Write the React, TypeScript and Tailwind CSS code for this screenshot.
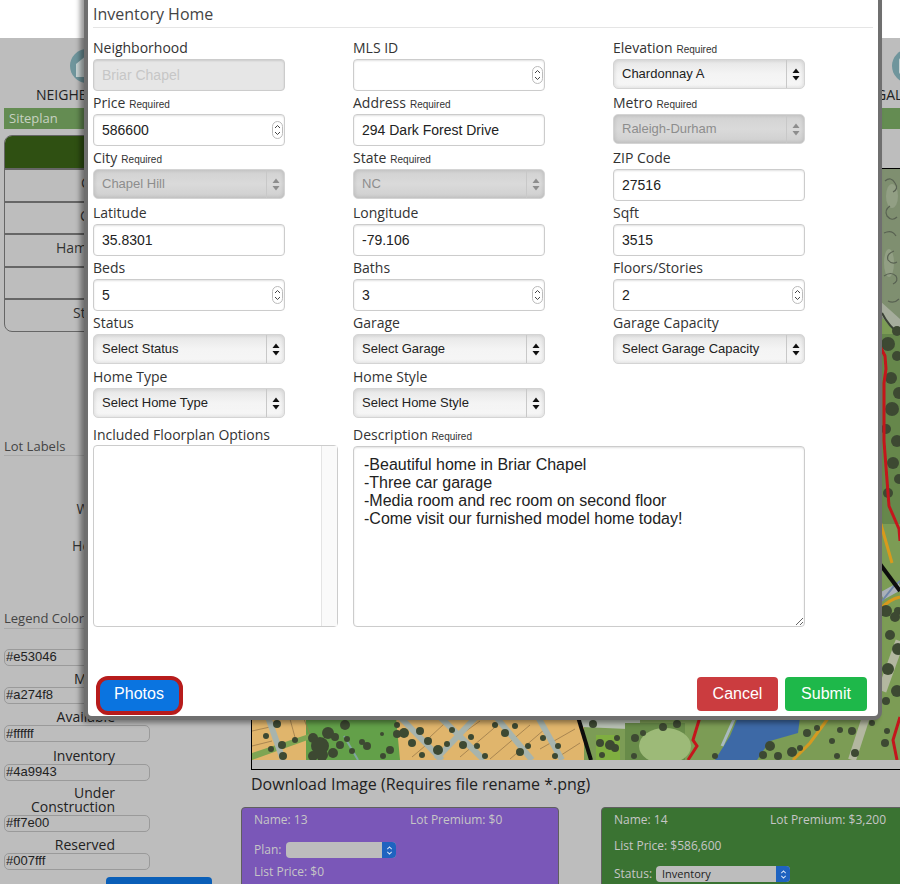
const sans = "font-['Liberation_Sans',Arial,sans-serif]";

// [x, y, r] of the tree blobs seen on the siteplan, in page coordinates
const trees = [
  [277,723,4],[266,735,3],[282,744,4],[271,748,3],[283,755,4],[295,739,3],[320,745,9],[313,737,5],[328,732,6],[322,754,6],
  [313,755,5],[335,736,4],[340,744,4],[345,724,5],[333,752,5],[352,750,3],[347,738,3],[367,745,4],[382,733,2],[362,741,3],
  [397,724,3],[397,733,4],[404,732,5],[390,749,4],[383,755,3],[412,742,4],[420,730,4],[428,740,4],[438,749,5],[422,754,3],
  [452,729,3],[463,744,4],[447,743,3],[477,745,3],[471,736,3],[485,755,3],[505,732,4],[515,725,3],[520,751,4],[528,745,3],
  [543,737,3],[558,745,3],[555,755,3],[495,724,3],[593,723,4],[600,742,4],[610,744,5],[615,747,4],[602,754,3],[617,737,3],
  [635,737,4],[643,732,3],[634,755,3],[663,726,4],[677,723,4],[715,755,3],[770,745,5],[763,754,4],[778,755,4],[792,751,5],
  [800,747,3],[807,732,4],[817,727,3],[832,740,3],[840,729,3],[852,730,4],[837,755,3],[855,752,4],[872,722,3],[887,730,3],
  [885,742,4],[888,343,7],[897,330,5],[891,377,6],[899,392,6],[892,408,7],[886,428,5],[897,440,6],[893,462,6],[899,478,5],
  [888,492,5],[897,355,5],[886,610,6],[895,616,5],[890,634,5],[898,648,6],[888,668,6],[897,690,6],[886,700,4],[898,610,4],
];

const lotLines = [
  "M252 730 L270 726","M252 745 L272 740","M290 718 L296 740","M304 718 L310 734","M452 740 L480 720","M460 756 L500 722",
  "M490 758 L530 724","M510 758 L545 728","M540 748 L575 728","M555 758 L580 742","M412 756 L425 745","M445 722 L430 736",
];

const squiggles = [
  "M885 180 q6 -5 10 2 q4 6 -2 9","M890 205 q-6 4 -3 10 q5 6 10 1","M884 232 q8 -4 12 3","M894 250 q-8 3 -6 9 q4 5 9 2",
  "M884 275 q7 -5 12 0 q3 5 -3 8","M888 300 q6 3 11 -2",
];

function SitePlan() {
  return (
    <svg viewBox="252 168 648 591" className="block h-[591px] w-[648px]">
      <defs>
        <filter id="soft">
          <feGaussianBlur stdDeviation="0.6" />
        </filter>
      </defs>
      <g filter="url(#soft)">
        <rect x="252" y="168" width="648" height="591" fill="#7b9c55" />
        {/* pale field on the right */}
        <rect x="880" y="168" width="20" height="150" fill="#7f8f70" />
        <ellipse cx="892" cy="195" rx="6" ry="12" fill="#929f84" />
        <ellipse cx="889" cy="262" rx="5" ry="14" fill="#929f84" />
        <path d="M880 312 Q888 326 900 332 L900 318 L880 300 Z" fill="#a6ad9c" />
        <path d="M882 312 Q889 326 900 333" fill="none" stroke="#3a4236" strokeWidth="2" />
        <rect x="880" y="333" width="20" height="190" fill="#66874b" />
        {squiggles.map((d) => (
          <path key={d} d={d} fill="none" stroke="#596252" strokeWidth="1.2" />
        ))}
        {/* lots */}
        <rect x="252" y="700" width="332" height="59" fill="#e0b56c" />
        <path d="M306 716 L396 716 L400 759 L306 759 Z" fill="#64a048" />
        <path d="M252 752 L312 732 L316 736 L252 759 Z" fill="#7ea552" />
        {lotLines.map((d) => (
          <path key={d} d={d} fill="none" stroke="#9b7a4a" strokeWidth="0.8" />
        ))}
        {/* roads */}
        <g fill="none" stroke="#a7b4ad" strokeWidth="6">
          <path d="M268 716 L283 759" />
          <path d="M400 716 L442 759" />
          <path d="M476 716 L436 758" />
          <path d="M440 716 L484 759" />
          <path d="M496 716 L532 759" />
          <path d="M538 716 L562 759" />
          <path d="M344 735 L358 759" strokeWidth="2" stroke="#7fa5a0" />
        </g>
        <path d="M576 716 L592 716 L640 716 L640 759 L628 759 L628 728 L582 726 Z" fill="#b8c0b4" />
        <rect x="596" y="734" width="24" height="25" fill="#7fae3f" />
        <rect x="625" y="722" width="60" height="37" fill="#688b49" />
        <ellipse cx="665" cy="745" rx="26" ry="18" fill="#9dba78" />
        <path d="M578 716 L591 759" fill="none" stroke="#0d0d0d" strokeWidth="4" />
        {/* lake */}
        <path d="M738 716 L800 716 L798 732 L770 740 L757 759 L715 759 L730 735 Z" fill="#3e69a6" />
        <path d="M735 716 L722 745" fill="none" stroke="#a9bac0" strokeWidth="3" />
        <path d="M866 716 L852 759" fill="none" stroke="#b3b7a0" strokeWidth="8" />
        <path d="M882 690 L900 640" fill="none" stroke="#b3b7a0" strokeWidth="9" />
        {/* paths at the right edge */}
        <path d="M882 595 L900 585" fill="none" stroke="#aab0b8" strokeWidth="8" />
        <path d="M882 600 L894 585 L900 580" fill="none" stroke="#6f86a8" strokeWidth="2" />
        <path d="M880 563 L900 590" fill="none" stroke="#0d0d0d" strokeWidth="4" />
        <path d="M880 520 L892 562" fill="none" stroke="#d89a1c" strokeWidth="3" />
        <path d="M880 608 Q890 598 900 596" fill="none" stroke="#d89a1c" strokeWidth="3" />
        <path d="M829 716 L810 742 L793 759" fill="none" stroke="#d49a22" strokeWidth="3" />
        {trees.map(([x, y, r]) => (
          <circle key={`${x}-${y}`} cx={x} cy={y} r={r} fill="#3d4a33" />
        ))}
        {/* red trail */}
        <g fill="none" stroke="#c4161c" strokeWidth="3">
          <path d="M880 345 L885 355 L886 368 L884 382 L884 440 L889 505 L899 528 L900 540" />
          <path d="M700 716 L693 739 L697 745 L688 759" />
          <path d="M900 716 L893 739 L897 759" />
        </g>
      </g>
    </svg>
  );
}

function Label({ text, required }: { text: string; required?: boolean }) {
  return (
    <label className="block h-[23px] text-sm leading-[23px] whitespace-nowrap text-[#333]">
      {text}
      {required && <span className={`${sans} ml-1 text-[10px]`}>Required</span>}
    </label>
  );
}

const inputClass = `${sans} h-[32px] w-full rounded-[4px] border border-[#ccc] px-2 text-sm shadow-[inset_0_1px_2px_rgba(0,0,0,0.12)] outline-none`;

function TextField({ value = "", disabled }: { value?: string; disabled?: boolean }) {
  return (
    <input
      readOnly
      value={value}
      className={`${inputClass} ${disabled ? "bg-[#e6e6e6] text-[#c6c6c6]" : "bg-white text-[#222]"}`}
    />
  );
}

function NumberField({ value = "" }: { value?: string }) {
  return (
    <div className="relative">
      <TextField value={value} />
      <div className="absolute top-[7px] right-[2px] flex h-[18px] w-[11px] items-center justify-center rounded-full border border-[#bbb] bg-white">
        <svg viewBox="0 0 9 14" className="h-[14px] w-[9px]" fill="none" stroke="#444" strokeWidth="1">
          <path d="M2 5 L4.5 2.5 L7 5" />
          <path d="M2 9 L4.5 11.5 L7 9" />
        </svg>
      </div>
    </div>
  );
}

function SelectField({ value, disabled }: { value: string; disabled?: boolean }) {
  return (
    <div
      className={`relative h-[30px] w-full rounded-[5px] border border-[#d4d4d4] shadow-[inset_0_0_4px_rgba(0,0,0,0.14)] bg-linear-to-b ${
        disabled ? "from-[#d2d2d2] via-[#dadada] to-[#cfcfcf]" : "from-[#e6e6e6] via-[#f4f4f4] to-[#f6f6f6]"
      }`}
    >
      <select
        disabled={disabled}
        value={value}
        onChange={() => {}}
        className={`${sans} h-[28px] w-full appearance-none bg-transparent pb-[3px] pl-2 text-[13px] outline-none ${
          disabled ? "text-[#8d8d8d] opacity-100" : "text-[#222]"
        }`}
      >
        <option>{value}</option>
      </select>
      <div className="pointer-events-none absolute top-0 right-0 flex h-full w-[18px] items-center justify-center border-l border-[#c8c8c8]">
        <svg viewBox="0 0 8 13" className="h-[13px] w-[8px]" fill={disabled ? "#8d8d8d" : "#111"}>
          <path d="M4 0.5 L7.5 5 L0.5 5 Z" />
          <path d="M4 12.5 L7.5 8 L0.5 8 Z" />
        </svg>
      </div>
    </div>
  );
}

type Field = {
  label: string;
  required?: boolean;
  kind: "text" | "number" | "select";
  value?: string;
  disabled?: boolean;
};

const fields: Field[] = [
  { label: "Neighborhood", kind: "text", value: "Briar Chapel", disabled: true },
  { label: "MLS ID", kind: "number" },
  { label: "Elevation", required: true, kind: "select", value: "Chardonnay A" },
  { label: "Price", required: true, kind: "number", value: "586600" },
  { label: "Address", required: true, kind: "text", value: "294 Dark Forest Drive" },
  { label: "Metro", required: true, kind: "select", value: "Raleigh-Durham", disabled: true },
  { label: "City", required: true, kind: "select", value: "Chapel Hill", disabled: true },
  { label: "State", required: true, kind: "select", value: "NC", disabled: true },
  { label: "ZIP Code", kind: "text", value: "27516" },
  { label: "Latitude", kind: "text", value: "35.8301" },
  { label: "Longitude", kind: "text", value: "-79.106" },
  { label: "Sqft", kind: "text", value: "3515" },
  { label: "Beds", kind: "number", value: "5" },
  { label: "Baths", kind: "number", value: "3" },
  { label: "Floors/Stories", kind: "number", value: "2" },
  { label: "Status", kind: "select", value: "Select Status" },
  { label: "Garage", kind: "select", value: "Select Garage" },
  { label: "Garage Capacity", kind: "select", value: "Select Garage Capacity" },
  { label: "Home Type", kind: "select", value: "Select Home Type" },
  { label: "Home Style", kind: "select", value: "Select Home Style" },
];

const description = `-Beautiful home in Briar Chapel
-Three car garage
-Media room and rec room on second floor
-Come visit our furnished model home today!`;

function InventoryModal() {
  return (
    <div className="absolute top-[-10px] left-[88px] h-[726px] w-[790px] rounded-[4px] bg-white px-[5px] shadow-[0_0_0_4px_#6f6f6f,-4px_3px_5px_4px_rgba(0,0,0,0.4)]">
      <h2 className="mt-0 h-[38px] border-b border-[#e5e5e5] pt-[12px] text-base leading-[24px] text-[#444]">
        Inventory Home
      </h2>
      <div className="grid grid-cols-[192px_192px_192px] grid-rows-[55px_55px_55px_55px_55px_54px_54px] gap-x-[68px] pt-[8px]">
        {fields.map((f) => (
          <div key={f.label}>
            <Label text={f.label} required={f.required} />
            {f.kind === "text" && <TextField value={f.value} disabled={f.disabled} />}
            {f.kind === "number" && <NumberField value={f.value} />}
            {f.kind === "select" && <SelectField value={f.value ?? ""} disabled={f.disabled} />}
          </div>
        ))}
      </div>
      <div className="flex gap-[15px]">
        <div className="w-[245px]">
          <div className="h-[26px] pt-1 text-sm leading-[23px] text-[#333]">Included Floorplan Options</div>
          <div className="flex h-[182px] rounded-[4px] border border-[#ccc] bg-white">
            <div className="flex-1" />
            <div className="w-[16px] border-l border-[#e4e4e4] bg-[#fafafa]" />
          </div>
        </div>
        <div className="w-[452px]">
          <div className="h-[27px] pt-1 text-sm leading-[23px] text-[#333]">
            Description <span className={`${sans} text-[10px]`}>Required</span>
          </div>
          <textarea
            readOnly
            value={description}
            className={`${sans} block h-[181px] w-full rounded-[4px] border border-[#ccc] bg-white px-[10px] pt-[9px] pb-2 text-base leading-[18px] text-[#222] shadow-[inset_0_1px_2px_rgba(0,0,0,0.12)] outline-none`}
          />
        </div>
      </div>
      <div className={`${sans} mt-[50px] flex items-start justify-between pr-[6px] pl-[3px] text-base text-white`}>
        <button className="-mt-[1px] h-[39px] w-[87px] rounded-[12px] border-4 border-[#b71c1c] bg-[#0a74e0] pr-[1px] pb-[3px]">
          Photos
        </button>
        <div className="flex gap-[7px]">
          <button className="h-[34px] w-[81px] rounded-[4px] bg-[#cb3c3f]">Cancel</button>
          <button className="h-[34px] w-[82px] rounded-[4px] bg-[#1eb84a]">Submit</button>
        </div>
      </div>
    </div>
  );
}

const legend = [
  { label: ["Sold"], value: "#e53046" },
  { label: ["Model"], value: "#a274f8" },
  { label: ["Available"], value: "#ffffff" },
  { label: ["Inventory"], value: "#4a9943" },
  { label: ["Under", "Construction"], value: "#ff7e00" },
  { label: ["Reserved"], value: "#007fff" },
];

// only the start of each row name shows beside the modal
const rows = [
  { text: "C", indent: "pl-[76px]" },
  { text: "C", indent: "pl-[75px]" },
  { text: "Ham", indent: "pl-[51px]" },
  { text: "", indent: "" },
  { text: "St", indent: "pl-[68px]" },
];

function Sidebar() {
  return (
    <aside className="w-[241px] shrink-0 pl-1 text-sm text-[#333]">
      <div className="mt-[6px] w-[232px] overflow-hidden rounded-[8px] border border-[#666]">
        <div className="h-[32px] bg-[#2f5012]" />
        {rows.map((row, i) => (
          <div key={i} className={`flex h-[32.5px] items-center border-t-2 border-[#666] pb-[4px] ${row.indent}`}>
            {row.text}
          </div>
        ))}
      </div>
      <div className="mt-[104px] h-[20px] border-b border-[#aaa] text-[13px] leading-[20px] text-[#444]">Lot Labels</div>
      <div className="mt-[43px] w-[111px] text-right">Width</div>
      <div className="mt-[17px] w-[111px] text-right">Height</div>
      <div className="mt-[51px] h-[22px] border-b border-[#aaa] text-[13px] leading-[22px] text-[#444]">Legend Colors</div>
      <div className="mt-[5px] flex flex-col gap-[6.4px]">
        {legend.map((item) => (
          <div key={item.value} className={item.label.length > 1 ? "-mt-[1.5px]" : ""}>
            <div className="w-[111px] pb-[1px] text-right leading-[14px] text-[#222]">
              {item.label.map((line) => (
                <div key={line}>{line}</div>
              ))}
            </div>
            <input
              readOnly
              value={item.value}
              className={`${sans} block h-[17px] w-[146px] rounded-[5px] border border-[#9a9a9a] bg-transparent px-[1px] text-[13px] text-[#222] outline-none`}
            />
          </div>
        ))}
      </div>
      <div className="mt-[7px] ml-[102px] h-[30px] w-[106px] rounded-[4px] bg-[#0a5fb8]" />
    </aside>
  );
}

function MiniSelect({ value, width }: { value: string; width: string }) {
  return (
    <div className={`flex h-[16px] ${width} overflow-hidden rounded-[4px] bg-[#bdbdbd]`}>
      <div className="flex-1 pl-[6px] text-[11px] leading-[16px] text-[#222]">{value}</div>
      <div className="flex w-[14px] items-center justify-center bg-[#1f63c0]">
        <svg viewBox="0 0 8 12" className="h-[11px] w-[7px]" fill="none" stroke="#d5e2f5" strokeWidth="1.2">
          <path d="M1.5 4.5 L4 2 L6.5 4.5" />
          <path d="M1.5 7.5 L4 10 L6.5 7.5" />
        </svg>
      </div>
    </div>
  );
}

function LotCards() {
  return (
    <div className="mt-[11px] flex gap-[42px] text-xs text-[#c6c6c6]">
      <div className="h-[120px] w-[318px] shrink-0 rounded-[4px] border border-[#5f5f5f] bg-[#7a57b8] px-3 pt-[4px]">
        <div className="flex h-[16px] leading-[16px]">
          <div className="w-[156px]">Name: 13</div>
          <div>Lot Premium: $0</div>
        </div>
        <div className="mt-[14px] flex h-[16px] items-center gap-[5px]">
          <span>Plan:</span>
          <MiniSelect value="" width="w-[110px]" />
        </div>
        <div className="mt-[6px] leading-[16px]">List Price: $0</div>
      </div>
      <div className="h-[120px] w-[318px] shrink-0 rounded-[4px] border border-[#5f5f5f] bg-[#3a7332] px-3 pt-[4px]">
        <div className="flex h-[16px] leading-[16px]">
          <div className="w-[156px]">Name: 14</div>
          <div>Lot Premium: $3,200</div>
        </div>
        <div className="mt-[10px] leading-[16px]">List Price: $586,600</div>
        <div className="mt-[12px] flex h-[16px] items-center gap-[4px]">
          <span>Status:</span>
          <MiniSelect value="Inventory" width="w-[134px]" />
        </div>
      </div>
    </div>
  );
}

export default function App() {
  return (
    <div className="relative h-[884px] w-[900px] overflow-hidden bg-[#bdbdbd] font-['Open_Sans',sans-serif]">
      <div className="h-[38px] bg-white" />
      <nav className="flex h-[70px] justify-between text-sm text-[#222]">
        <div className="ml-[36px] flex w-[100px] flex-col items-start pt-[11px]">
          <svg viewBox="0 0 34 34" className="ml-[34px] h-[34px] w-[34px]">
            <circle cx="17" cy="17" r="17" fill="#6f959c" />
            <path d="M17 6 L28 15 L28 28 L6 28 L6 15 Z" fill="#c9d4d4" />
          </svg>
          <span className="mt-[2px] leading-[20px]">NEIGHBORHOOD</span>
        </div>
        <div className="-mr-[40px] flex w-[60px] flex-col items-start pt-[11px]">
          <svg viewBox="0 0 34 34" className="ml-[12px] h-[34px] w-[34px]">
            <circle cx="17" cy="17" r="17" fill="#6f959c" />
            <rect x="7" y="9" width="20" height="16" rx="2" fill="#c9d4d4" />
          </svg>
          <span className="mt-[2px] -ml-[4px] leading-[20px]">GALLERY</span>
        </div>
      </nav>
      <div className="ml-1 h-[21px] bg-[#648c52] pl-[5px] text-[13px] leading-[21px] text-[#c8d2c2]">Siteplan</div>
      <div className="flex">
        <Sidebar />
        <main className="w-[659px] shrink-0">
          <div className="mt-[39px] ml-[10px] h-[602px] border-t border-b border-l border-black">
            <SitePlan />
          </div>
          <div className="mt-[2px] ml-[10px] h-[24px] text-base leading-[24px] text-[#222]">
            Download Image (Requires file rename *.png)
          </div>
          <LotCards />
        </main>
      </div>
      <InventoryModal />
    </div>
  );
}
